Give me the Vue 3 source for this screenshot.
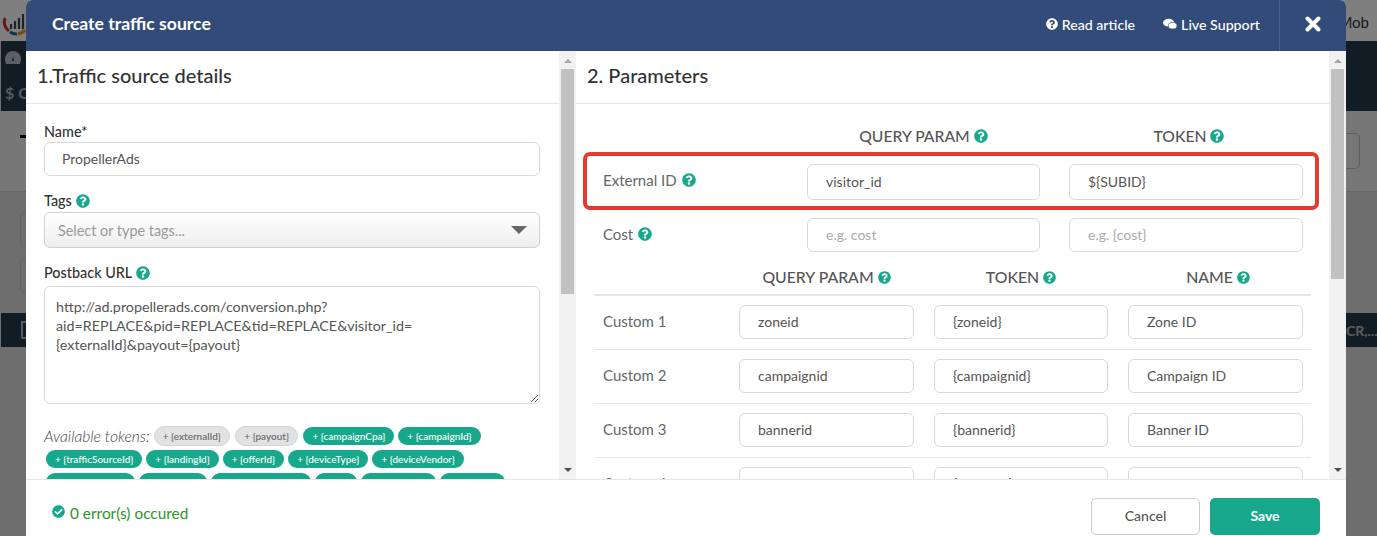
<script setup>
const helpPath = "M504 256c0 136.997-111.043 248-248 248S8 392.997 8 256C8 119.083 119.043 8 256 8s248 111.083 248 248zM262.655 90c-54.497 0-89.255 22.957-116.549 63.758-3.536 5.286-2.353 12.415 2.715 16.258l34.699 26.31c5.205 3.947 12.621 3.008 16.665-2.122 17.864-22.658 30.113-35.797 57.303-35.797 20.429 0 45.698 13.148 45.698 32.958 0 14.976-12.363 22.667-32.534 33.976C247.128 238.528 216 254.941 216 296v4c0 6.627 5.373 12 12 12h56c6.627 0 12-5.373 12-12v-1.333c0-28.462 83.186-29.647 83.186-106.667 0-58.002-60.165-102-116.531-102zM256 338c-25.365 0-46 20.635-46 46 0 25.364 20.635 46 46 46s46-20.636 46-46c0-25.365-20.635-46-46-46z"
const checkPath = "M504 256c0 136.967-111.033 248-248 248S8 392.967 8 256 119.033 8 256 8s248 111.033 248 248zM227.314 387.314l184-184c6.248-6.248 6.248-16.379 0-22.627l-22.627-22.627c-6.248-6.249-16.379-6.249-22.628 0L216 308.118l-70.059-70.059c-6.248-6.248-16.379-6.248-22.628 0l-22.627 22.627c-6.248 6.248-6.248 16.379 0 22.627l104 104c6.249 6.249 16.379 6.249 22.628 0z"

const postback = "http://ad.propellerads.com/conversion.php?aid=REPLACE&pid=REPLACE&tid=REPLACE&visitor_id={externalId}&payout={payout}"

const usedTokens = ["externalId", "payout"]
const tokens = [
  "campaignCpa", "campaignId", "trafficSourceId", "landingId", "offerId",
  "deviceType", "deviceVendor", "deviceModel", "browser", "browserVersion",
  "os", "osVersion", "country",
]

const customRows = [
  { label: "Custom 1", param: "zoneid", token: "{zoneid}", name: "Zone ID" },
  { label: "Custom 2", param: "campaignid", token: "{campaignid}", name: "Campaign ID" },
  { label: "Custom 3", param: "bannerid", token: "{bannerid}", name: "Banner ID" },
  { label: "Custom 4", param: "sourceid", token: "{sourceid}", name: "Source ID" },
]
</script>

<template>
  <div class="page">
    <!-- page behind the dialog -->
    <div class="topbar">
      <svg class="logo" viewBox="0 0 26 26" width="26" height="26">
        <path d="M3 7a11 11 0 0 0 4 13" fill="none" stroke="#c9302c" stroke-width="3" />
        <path d="M8 21a11 11 0 0 0 7 2" fill="none" stroke="#1d6f8f" stroke-width="3" />
        <path d="M16 23a11 11 0 0 0 7-4" fill="none" stroke="#e8a020" stroke-width="3" />
        <path d="M9 18v-5M13 18v-8M17 18V7M21 18V3" fill="none" stroke="#3c4a54" stroke-width="2.2" />
      </svg>
      <span class="mob">Mob</span>
    </div>
    <div class="nav">
      <svg class="gauge" viewBox="0 0 16 13" width="16" height="13">
        <path d="M8 0a8 8 0 0 0-8 8c0 2 .6 3.600 1.500 5h13c.9-1.400 1.500-3 1.500-5a8 8 0 0 0-8-8zM8 5l1 5H7z" fill="#b4c0ca" fill-rule="evenodd" />
      </svg>
      <span class="nav-item">$ C</span>
    </div>
    <div class="toolbar">
      <span class="dash"></span>
      <span class="ghost-box"></span>
    </div>
    <div class="filters">
      <span class="ghost-field"></span>
      <span class="ghost-field"></span>
    </div>
    <div class="band">
      <span class="band-box"></span>
      <span class="band-text">CR,...</span>
    </div>
    <div class="overlay"></div>

    <div class="modal">
      <header class="modal-head">
        <h1 class="modal-title">Create traffic source</h1>
        <a class="head-link">
          <svg class="icon-sm" viewBox="0 0 512 512"><path :d="helpPath" fill="#fff" /></svg>
          Read article
        </a>
        <a class="head-link">
          <svg class="icon-chat" viewBox="0 0 16 13">
            <ellipse cx="6.500" cy="5" rx="6.500" ry="4.500" fill="#fff" />
            <ellipse cx="11" cy="8.500" rx="5" ry="3.800" fill="#fff" stroke="#324b78" stroke-width=".8" />
          </svg>
          Live Support
        </a>
        <button class="close">
          <svg viewBox="0 0 16 16" width="16" height="16">
            <path d="M2.500 2.500l11 11M13.500 2.500l-11 11" stroke="#fff" stroke-width="4" stroke-linecap="round" />
          </svg>
        </button>
      </header>

      <div class="modal-body">
        <section class="pane pane-left">
          <div class="pane-content">
            <h2 class="pane-title">1.Traffic source details</h2>
            <div class="form">
              <label class="label">Name*</label>
              <input class="field" value="PropellerAds" />

              <label class="label label-tags">
                Tags
                <svg class="help" viewBox="0 0 512 512"><path :d="helpPath" /></svg>
              </label>
              <div class="select">
                <span>Select or type tags...</span>
                <i class="caret"></i>
              </div>

              <label class="label label-url">
                Postback URL
                <svg class="help" viewBox="0 0 512 512"><path :d="helpPath" /></svg>
              </label>
              <textarea class="url" :value="postback"></textarea>

              <div class="tokens">
                <em class="tokens-label">Available tokens:</em>
                <span v-for="t in usedTokens" :key="t" class="pill pill-used">+ {{ "{" + t + "}" }}</span>
                <span v-for="t in tokens" :key="t" class="pill">+ {{ "{" + t + "}" }}</span>
              </div>
            </div>
          </div>
          <div class="scrollbar">
            <i class="arrow-up"></i>
            <div class="thumb thumb-left"></div>
            <i class="arrow-down"></i>
          </div>
        </section>

        <section class="pane pane-right">
          <div class="pane-content">
            <h2 class="pane-title title-right">2. Parameters</h2>
            <div class="params">
              <div class="grid-main grid-head">
                <span></span>
                <span class="col-head">QUERY PARAM <svg class="help" viewBox="0 0 512 512"><path :d="helpPath" /></svg></span>
                <span class="col-head">TOKEN <svg class="help" viewBox="0 0 512 512"><path :d="helpPath" /></svg></span>
              </div>
              <div class="grid-main row-external">
                <span class="row-label">External ID <svg class="help" viewBox="0 0 512 512"><path :d="helpPath" /></svg></span>
                <input class="field tall" value="visitor_id" />
                <input class="field tall" value="${SUBID}" />
                <div class="highlight"></div>
              </div>
              <div class="grid-main row-cost">
                <span class="row-label">Cost <svg class="help" viewBox="0 0 512 512"><path :d="helpPath" /></svg></span>
                <input class="field" placeholder="e.g. cost" />
                <input class="field" placeholder="e.g. {cost}" />
              </div>

              <div class="grid-custom custom-head">
                <span></span>
                <span class="col-head">QUERY PARAM <svg class="help small" viewBox="0 0 512 512"><path :d="helpPath" /></svg></span>
                <span class="col-head">TOKEN <svg class="help small" viewBox="0 0 512 512"><path :d="helpPath" /></svg></span>
                <span class="col-head">NAME <svg class="help small" viewBox="0 0 512 512"><path :d="helpPath" /></svg></span>
              </div>
              <div v-for="row in customRows" :key="row.label" class="grid-custom custom-row">
                <span class="row-label">{{ row.label }}</span>
                <input class="field" :value="row.param" />
                <input class="field" :value="row.token" />
                <input class="field" :value="row.name" />
              </div>
            </div>
          </div>
          <div class="scrollbar">
            <i class="arrow-up"></i>
            <div class="thumb thumb-right"></div>
            <i class="arrow-down"></i>
          </div>
        </section>
      </div>

      <footer class="modal-foot">
        <div class="status">
          <svg class="status-icon" viewBox="0 0 512 512"><path :d="checkPath" /></svg>
          <span>0 error(s) occured</span>
        </div>
        <button class="btn btn-cancel">Cancel</button>
        <button class="btn btn-save">Save</button>
      </footer>
    </div>
  </div>
</template>

<style>
html,
body {
  margin: 0;
  overflow: hidden;
}
</style>

<style scoped>
.page {
  position: relative;
  height: 100vh;
  overflow: hidden;
  background: #dcdcdc;
  font-family: "Lato", "Open Sans", sans-serif;
  color: #555;
}

/* page behind */
.topbar {
  height: 41px;
  background: #fff;
  display: flex;
  justify-content: space-between;
  align-items: center;
  padding: 0 8px 0 2px;
}
.logo {
  margin-top: 6px;
}
.mob {
  font-size: 15px;
  color: #333;
  margin-top: 3px;
}
.nav {
  height: 70px;
  margin-left: 1px;
  background: #24384a;
  display: flex;
  flex-direction: column;
  padding-left: 4px;
  box-sizing: border-box;
  padding-top: 10px;
}
.nav-item {
  margin-top: 19px;
  font-size: 16px;
  color: #aab4bc;
  font-weight: 700;
}
.toolbar {
  height: 81px;
  background: #eee;
  border-bottom: 1px solid #ccc;
  box-sizing: border-box;
  display: flex;
  justify-content: space-between;
  padding: 22px 17px 0 20px;
}
.dash {
  width: 8px;
  height: 3px;
  margin-top: 2px;
  background: #000;
}
.ghost-box {
  width: 40px;
  height: 36px;
  box-sizing: border-box;
  border: 1px solid #bbb;
  border-radius: 5px;
}
.filters {
  height: 121px;
  padding: 20px 0 0 20px;
  box-sizing: border-box;
  display: flex;
  flex-direction: column;
  gap: 11px;
}
.ghost-field {
  width: 40px;
  height: 35px;
  box-sizing: border-box;
  border: 1px solid #c8c8c8;
  border-radius: 5px;
}
.band {
  height: 34px;
  margin-left: 1px;
  background: #24384a;
  display: flex;
  justify-content: space-between;
  align-items: center;
  padding-left: 20px;
}
.band-box {
  width: 10px;
  height: 14px;
  border: 2px solid #aab4bc;
}
.band-text {
  font-size: 14px;
  font-weight: 700;
  color: #bbb;
  width: 31px;
  overflow: hidden;
  white-space: nowrap;
}
.overlay {
  position: absolute;
  inset: 0;
  background: rgba(0, 0, 0, 0.5);
}

/* dialog */
.modal {
  position: absolute;
  top: 0;
  left: 26px;
  width: 1320px;
  height: 536px;
  display: flex;
  flex-direction: column;
  background: #fff;
  border-radius: 6px 6px 0 0;
  overflow: hidden;
}
.modal-head {
  flex: none;
  height: 51px;
  display: flex;
  align-items: center;
  background: #324b78;
  color: #fff;
  padding-left: 26px;
}
.modal-title {
  margin: 0 auto 4px 0;
  font-size: 17.6px;
  font-weight: 700;
}
.head-link {
  display: flex;
  align-items: center;
  font-size: 14.2px;
  font-weight: 500;
  margin-right: 28px;
  margin-bottom: 3px;
}
.head-link + .head-link {
  margin-right: 19px;
}
.icon-sm {
  width: 12px;
  height: 12px;
  margin-right: 4px;
}
.icon-chat {
  width: 14px;
  height: 12px;
  margin-right: 4px;
}
.close {
  width: 67px;
  height: 51px;
  padding: 0 0 3px;
  border: 0;
  border-left: 1px solid #47608c;
  background: none;
  display: flex;
  align-items: center;
  justify-content: center;
}
.modal-body {
  flex: 1;
  min-height: 0;
  display: flex;
}
.pane {
  display: flex;
  min-width: 0;
}
.pane-left {
  width: 550px;
}
.pane-right {
  width: 770px;
}
.pane-content {
  flex: 1;
  min-width: 0;
  overflow: hidden;
}
.pane-title {
  margin: 0;
  height: 53px;
  line-height: 48px;
  box-sizing: border-box;
  padding-left: 11px;
  border-bottom: 1px solid #e6e6e6;
  font-size: 20px;
  font-weight: 500;
  color: #333;
}
.scrollbar {
  flex: none;
  width: 17px;
  background: #f1f1f1;
  display: flex;
  flex-direction: column;
  align-items: center;
  padding-top: 8px;
  box-sizing: border-box;
}
.arrow-up {
  border: 4px solid transparent;
  border-top: 0;
  border-bottom: 4px solid #a3a3a3;
}
.arrow-down {
  margin-top: auto;
  margin-bottom: 7px;
  border: 4px solid transparent;
  border-bottom: 0;
  border-top: 4px solid #505050;
}
.thumb {
  width: 13px;
  margin-top: 6px;
  background: #c1c1c1;
}
.thumb-left {
  height: 225px;
}
.thumb-right {
  height: 210px;
}

/* left form */
.form {
  padding: 19px 19px 0 18px;
}
.form .field {
  padding-left: 17px;
}
.label {
  display: flex;
  align-items: center;
  gap: 4px;
  height: 17px;
  margin-bottom: 2px;
  font-size: 14.4px;
  font-weight: 500;
  color: #333;
}
.label-tags {
  margin-top: 16px;
  margin-bottom: 3px;
}
.label-url {
  margin-top: 16px;
  margin-bottom: 5px;
}
.help {
  width: 14px;
  height: 14px;
  fill: #17a88b;
  flex: none;
  vertical-align: -1px;
}
.help.small {
  width: 13px;
  height: 13px;
}
.field {
  display: block;
  width: 100%;
  height: 34px;
  box-sizing: border-box;
  padding: 0 18px 2px;
  border: 1px solid #d9d9d9;
  border-radius: 6px;
  background: #fff;
  font: 400 14px "Lato", sans-serif;
  color: #555;
  outline: none;
}
.field.tall {
  height: 36px;
}
.field::placeholder {
  color: #aaa;
  opacity: 1;
}
.select {
  height: 36px;
  box-sizing: border-box;
  padding: 0 13px;
  display: flex;
  align-items: center;
  justify-content: space-between;
  border: 1px solid #d2d2d2;
  border-radius: 6px;
  background: linear-gradient(#fff, #eee);
  font-size: 14.4px;
  color: #999;
}
.caret {
  border: 8px solid transparent;
  border-top: 8px solid #666;
  border-bottom: 0;
  margin-right: -1px;
}
.url {
  display: block;
  width: 100%;
  height: 118px;
  box-sizing: border-box;
  padding: 10px 11px;
  border: 1px solid #d9d9d9;
  border-radius: 6px;
  font: 400 14.3px/19px "Lato", sans-serif;
  color: #555;
  resize: vertical;
  outline: none;
}
.tokens {
  display: flex;
  flex-wrap: wrap;
  align-items: center;
  row-gap: 5px;
  margin-top: 23px;
}
.tokens-label {
  font-size: 15.7px;
  font-weight: 300;
  color: #444;
  margin-right: 2px;
}
.pill {
  height: 18px;
  line-height: 18px;
  margin: 0 2px;
  padding: 0 9px;
  border-radius: 9px;
  background: #17a88b;
  color: #fff;
  font-size: 10px;
  font-weight: 500;
  white-space: nowrap;
}
.pill-used {
  height: 20px;
  line-height: 18px;
  box-sizing: border-box;
  margin: -1px 3.500px -1px 2px;
  padding: 0 8px;
  border: 1px solid #d5d5d5;
  border-radius: 10px;
  background: #e2e2e2;
  color: #666;
}

/* right form */
.params {
  padding: 0 18px 0 18px;
}
.grid-main {
  display: grid;
  grid-template-columns: 175px 233px 234px;
  column-gap: 29px;
  padding: 0 8px 0 9px;
  align-items: center;
  position: relative;
}
.grid-head {
  height: 60px;
  padding-top: 4px;
  box-sizing: border-box;
}
.grid-head .col-head {
  font-size: 15.7px;
}
.grid-head .col-head:last-child {
  padding-left: 6px;
}
.col-head {
  text-align: center;
  font-size: 15.8px;
  font-weight: 500;
  color: #555;
  white-space: nowrap;
}
.custom-head .col-head:last-child {
  padding-left: 5px;
}
.row-label {
  font-size: 15px;
  font-weight: 400;
  color: #666;
}
.row-label .help {
  margin-left: 1px;
}
.row-external .row-label {
  margin-top: -5px;
}
.row-cost .row-label {
  margin-top: -3px;
}
.custom-row .row-label {
  margin-top: -2px;
}
.row-external {
  height: 36px;
}
.row-cost {
  margin-top: 18px;
  height: 34px;
}
.highlight {
  position: absolute;
  left: -11px;
  right: -8px;
  top: -12px;
  bottom: -10px;
  border: 4px solid #e53a2f;
  border-radius: 7px;
  pointer-events: none;
}
.grid-custom {
  display: grid;
  grid-template-columns: 116px 175px 174px 175px;
  column-gap: 20px;
  align-items: center;
  padding: 0 8px 0 9px;
}
.custom-head {
  height: 44px;
  box-sizing: border-box;
  border-bottom: 2px solid #e6e6e6;
  padding-top: 6px;
}
.custom-row {
  padding-top: 9px;
  padding-bottom: 10px;
  border-bottom: 1px solid #e6e6e6;
}

/* footer */
.modal-foot {
  flex: none;
  height: 57px;
  box-sizing: border-box;
  border-top: 1px solid #e6e6e6;
  display: flex;
  align-items: center;
  gap: 10px;
  padding: 16px 26px 0 26px;
}
.status {
  margin-right: auto;
  display: flex;
  align-items: center;
  gap: 5px;
  font-size: 15.4px;
  color: #2a962a;
  margin-top: -6px;
}
.status-icon {
  width: 13px;
  height: 13px;
  fill: #17a88b;
  margin-top: -4px;
}
.btn {
  width: 110px;
  height: 37px;
  border-radius: 5px;
  font: 500 14px "Lato", sans-serif;
  padding-bottom: 3px;
}
.btn-cancel {
  width: 109px;
  background: #fff;
  color: #555;
  border: 1px solid #ccc;
}
.btn-save {
  background: #17a88b;
  color: #fff;
  border: 0;
  font-weight: 700;
}
</style>
